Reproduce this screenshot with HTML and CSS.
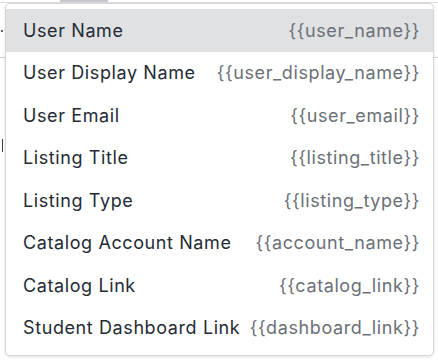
FILE: index.html
```html
<!DOCTYPE html>
<html>
<head>
<meta charset="utf-8">
<link rel="stylesheet" href="styles.css">
</head>
<body>
<div class="backdrop">
  <div class="bg-tab"></div>
  <div class="bg-line"></div>
  <div class="bg-rule-left"></div>
  <div class="bg-rule-right"></div>
  <span class="bg-dot"></span>
  <span class="bg-sliver"></span>
</div>
<div class="menu">
  <div class="item active"><span class="label">User Name</span><span class="token">{{user_name}}</span></div>
  <div class="item"><span class="label">User Display Name</span><span class="token">{{user_display_name}}</span></div>
  <div class="item"><span class="label">User Email</span><span class="token">{{user_email}}</span></div>
  <div class="item"><span class="label">Listing Title</span><span class="token">{{listing_title}}</span></div>
  <div class="item"><span class="label">Listing Type</span><span class="token">{{listing_type}}</span></div>
  <div class="item"><span class="label">Catalog Account Name</span><span class="token">{{account_name}}</span></div>
  <div class="item"><span class="label">Catalog Link</span><span class="token">{{catalog_link}}</span></div>
  <div class="item"><span class="label">Student Dashboard Link</span><span class="token">{{dashboard_link}}</span></div>
</div>
</body>
</html>
```
FILE: styles.css
```css
html, body {
  margin: 0;
  padding: 0;
  background: #ffffff;
  width: 438px;
  height: 362px;
  overflow: hidden;
  font-family: Inter, "Noto Sans", sans-serif;
}
.backdrop {
  position: relative;
  width: 438px;
  height: 362px;
}
.bg-tab {
  position: absolute;
  left: 60px;
  top: 0;
  width: 48px;
  height: 2px;
  background: #c8c8cc;
}
.bg-line {
  position: absolute;
  left: 0;
  top: 2px;
  width: 438px;
  height: 1px;
  background: #dcdcde;
}
.bg-rule-left {
  position: absolute;
  left: 0;
  top: 57px;
  width: 6px;
  height: 1px;
  background: #d0d0d3;
}
.bg-rule-right {
  position: absolute;
  left: 433px;
  top: 57px;
  width: 5px;
  height: 1px;
  background: #d0d0d3;
}
.bg-dot {
  position: absolute;
  left: 1px;
  top: 30px;
  width: 2px;
  height: 2px;
  border-radius: 50%;
  background: #333;
}
.bg-sliver {
  position: absolute;
  left: 2px;
  top: 139px;
  width: 1px;
  height: 13px;
  background: #3a3f47;
}
.menu {
  position: absolute;
  left: 5px;
  top: 3px;
  width: 427px;
  padding: 5px 0 6px;
  background: #ffffff;
  border: 1px solid #d6d8dc;
  border-radius: 5px;
  box-shadow: 0 1px 3px rgba(0, 0, 0, 0.12);
  display: flex;
  flex-direction: column;
}
.item {
  height: 42.5px;
  display: flex;
  align-items: center;
  justify-content: space-between;
  padding: 0 13px 0 17px;
  gap: 8px;
}
.item.active {
  background: #e0e1e3;
}
.label {
  font-size: 18px;
  color: #252b35;
  letter-spacing: 0.6px;
  white-space: nowrap;
}
.token {
  font-size: 18px;
  color: #6b7078;
  letter-spacing: 0.6px;
  white-space: nowrap;
}
```
